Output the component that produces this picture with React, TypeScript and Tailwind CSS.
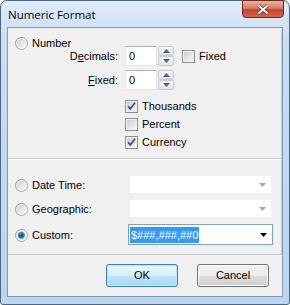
import React from "react";

function Radio({ checked = false }: { checked?: boolean }) {
  return (
    <svg width="13" height="13" viewBox="0 0 13 13" className="shrink-0">
      <defs>
        <linearGradient id="rgOuter" x1="0" y1="0" x2="1" y2="1">
          <stop offset="0" stopColor="#8a8a8a" />
          <stop offset="1" stopColor="#b8b8b8" />
        </linearGradient>
        <linearGradient id="rgInner" x1="0" y1="0" x2="1" y2="1">
          <stop offset="0" stopColor="#cfcfcf" />
          <stop offset="1" stopColor="#fbfbfb" />
        </linearGradient>
        <radialGradient id="rgDot" cx="0.45" cy="0.45" r="0.6">
          <stop offset="0" stopColor="#0b3f7c" />
          <stop offset="0.55" stopColor="#1f6db8" />
          <stop offset="1" stopColor="#8fd0f7" />
        </radialGradient>
      </defs>
      <circle cx="6.5" cy="6.5" r="6" fill="#f6f6f6" stroke="url(#rgOuter)" strokeWidth="1" />
      <circle cx="6.5" cy="6.5" r="4.6" fill="url(#rgInner)" />
      {checked && <circle cx="6.5" cy="6.5" r="3.6" fill="url(#rgDot)" />}
      {checked && <circle cx="5.4" cy="5.2" r="1" fill="#a8dcff" opacity="0.6" />}
    </svg>
  );
}

function Check({ checked = false }: { checked?: boolean }) {
  return (
    <svg width="13" height="13" viewBox="0 0 13 13" className="shrink-0">
      <defs>
        <linearGradient id="cbInner" x1="0" y1="0" x2="1" y2="1">
          <stop offset="0" stopColor="#cbcbcb" />
          <stop offset="1" stopColor="#f8f8f8" />
        </linearGradient>
      </defs>
      <rect x="0.5" y="0.5" width="12" height="12" fill="#f4f4f4" stroke="#8e8f8f" />
      <rect x="2" y="2" width="9" height="9" fill="url(#cbInner)" />
      {checked && (
        <path d="M3 6.2 L5.3 8.8 L10 2.8" fill="none" stroke="#334e99" strokeWidth="1.7" />
      )}
    </svg>
  );
}

function Spin() {
  const btn =
    "w-[16px] h-[10px] flex items-center justify-center border border-[#c4c9cf] rounded-[2px] bg-[linear-gradient(to_bottom,#f7f7f7,#e6e6e6)]";
  return (
    <div className="flex flex-col ml-[1px]">
      <div className={btn}>
        <svg width="7" height="4" viewBox="0 0 7 4">
          <path d="M0 4 L3.5 0 L7 4 Z" fill="#4c6288" />
        </svg>
      </div>
      <div className={btn}>
        <svg width="7" height="4" viewBox="0 0 7 4">
          <path d="M0 0 L3.5 4 L7 0 Z" fill="#4c6288" />
        </svg>
      </div>
    </div>
  );
}

function NumInput() {
  return (
    <div className="w-[32px] h-[20px] bg-white border border-[#dfe3ea] border-t-[#abadb3] flex items-center pl-[3px]">
      0
    </div>
  );
}

function DisabledCombo() {
  return (
    <div className="w-[145px] h-[21px] p-[2px]">
      <div className="w-full h-full bg-white flex items-center justify-end pr-[5px]">
        <svg width="7" height="4" viewBox="0 0 7 4">
          <path d="M0 0 L3.5 4 L7 0 Z" fill="#a7a7a7" />
        </svg>
      </div>
    </div>
  );
}

export default function App() {
  return (
    <div className="w-[290px] h-[305px] font-['Liberation_Sans',Arial,sans-serif] text-[11px] text-black">
      <div className="w-full h-full flex flex-col border border-[#4d6683] rounded-t-[7px] rounded-b-[3px] bg-[linear-gradient(to_bottom,#dfecf9,#c9ddf3_40px,#bdd4ef)]">
        {/* title bar */}
        <div className="h-[26px] flex items-start shrink-0">
          <div className="pl-[7px] pt-[6px] font-['Open_Sans',sans-serif] text-[11.5px] leading-[16px] text-black">
            Numeric Format
          </div>
          <div className="ml-auto mr-[5px] -mt-[1px] w-[42px] h-[18px] rounded-b-[4px] border border-[#6b2a1f] bg-[linear-gradient(to_bottom,#eab4a3,#d97d66_45%,#c4432b_55%,#d8644a)] flex items-center justify-center">
            <svg width="14" height="11" viewBox="0 0 14 11">
              <path
                d="M2.5 1.5 L11.5 9.5 M11.5 1.5 L2.5 9.5"
                fill="none"
                stroke="#6a2c20"
                strokeWidth="3.6"
              />
              <path
                d="M2.5 1.5 L11.5 9.5 M11.5 1.5 L2.5 9.5"
                fill="none"
                stroke="#ffffff"
                strokeWidth="2"
              />
            </svg>
          </div>
        </div>

        {/* client area */}
        <div className="mx-[6px] mb-[7px] flex-1 border border-[#8499b1] bg-[#f0f0f0] flex flex-col">
          {/* panel */}
          <div className="flex flex-col border-b border-b-[#c9c9c9] border-r border-r-[#c9c9c9]">
            {/* section 1 */}
            <div className="h-[130px] flex flex-col pt-[9px]">
              <div className="h-[13px] flex items-center pl-[7px]">
                <Radio />
                <span className="ml-[4px]">Number</span>
              </div>
              <div className="-mt-[4px] h-[20px] flex items-center">
                <div className="w-[110px] text-right">
                  D<span className="underline">e</span>cimals:
                </div>
                <div className="ml-[7px] flex items-center">
                  <NumInput />
                  <Spin />
                </div>
                <div className="ml-[8px] flex items-center">
                  <Check />
                  <span className="ml-[4px]">Fixed</span>
                </div>
              </div>
              <div className="mt-[4px] h-[20px] flex items-center">
                <div className="w-[110px] text-right">
                  <span className="underline">F</span>ixed:
                </div>
                <div className="ml-[7px] flex items-center">
                  <NumInput />
                  <Spin />
                </div>
              </div>
              <div className="mt-[10px] flex flex-col gap-[5px] pl-[117px]">
                <div className="h-[13px] flex items-center">
                  <Check checked />
                  <span className="ml-[4px]">Thousands</span>
                </div>
                <div className="h-[13px] flex items-center">
                  <Check />
                  <span className="ml-[4px]">Percent</span>
                </div>
                <div className="h-[13px] flex items-center">
                  <Check checked />
                  <span className="ml-[4px]">Currency</span>
                </div>
              </div>
            </div>
            {/* separator */}
            <div className="h-[1px] bg-[#c9c9c9]" />
            <div className="h-[1px] bg-white" />
            {/* section 2 */}
            <div className="h-[94px] flex flex-col pt-[14px] gap-[3px]">
              <div className="h-[21px] flex items-center">
                <div className="w-[120px] flex items-center pl-[7px] pt-[2px]">
                  <Radio />
                  <span className="ml-[4px]">Date Time:</span>
                </div>
                <DisabledCombo />
              </div>
              <div className="h-[21px] flex items-center">
                <div className="w-[120px] flex items-center pl-[7px] pt-[2px]">
                  <Radio />
                  <span className="ml-[4px]">Geographic:</span>
                </div>
                <DisabledCombo />
              </div>
              <div className="h-[21px] flex items-center mt-[2px]">
                <div className="w-[120px] flex items-center pl-[7px] pt-[2px]">
                  <Radio checked />
                  <span className="ml-[4px]">Custom:</span>
                </div>
                <div className="w-[145px] h-[21px] bg-white border border-[#7da2ce] flex items-center pl-[1px] pr-[5px]">
                  <span className="bg-[#3399ff] text-white h-[16px] leading-[16px] px-[1px]">
                    $###,###,##0
                  </span>
                  <svg width="7" height="4" viewBox="0 0 7 4" className="ml-auto">
                    <path d="M0 0 L3.5 4 L7 0 Z" fill="#000" />
                  </svg>
                </div>
              </div>
            </div>
          </div>

          {/* buttons */}
          <div className="flex justify-end pt-[9px] pr-[13px] gap-[19px]">
            <div className="w-[72px] h-[23px] rounded-[3px] border border-[#3c7fb1] bg-[linear-gradient(to_bottom,#eaf6fd,#d9f0fc_50%,#bee6fd_50%,#a7d9f5)] shadow-[inset_0_0_0_1px_#c5e6f7] flex items-center justify-center">
              OK
            </div>
            <div className="w-[72px] h-[23px] rounded-[3px] border border-[#707070] bg-[linear-gradient(to_bottom,#f2f2f2,#ebebeb_50%,#dddddd_50%,#cfcfcf)] shadow-[inset_0_0_0_1px_#fcfcfc] flex items-center justify-center">
              Cancel
            </div>
          </div>
        </div>
      </div>
    </div>
  );
}
